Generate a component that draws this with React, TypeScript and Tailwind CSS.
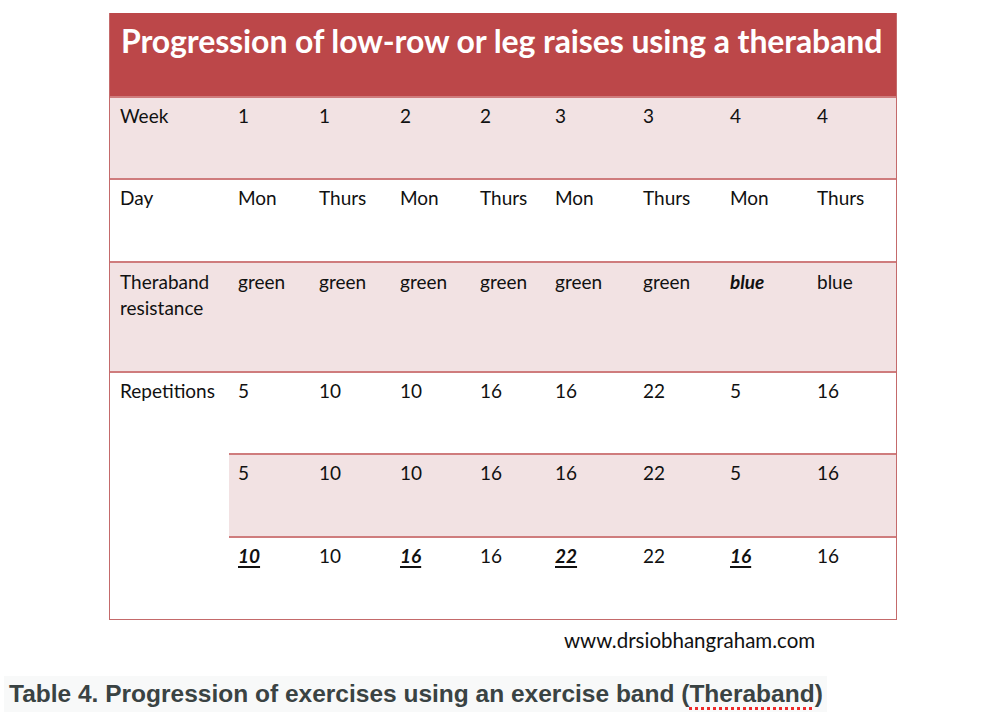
const weeks = ["1", "1", "2", "2", "3", "3", "4", "4"];
const days = ["Mon", "Thurs", "Mon", "Thurs", "Mon", "Thurs", "Mon", "Thurs"];
const bands = ["green", "green", "green", "green", "green", "green", "blue", "blue"];
const reps1 = ["5", "10", "10", "16", "16", "22", "5", "16"];
const reps3 = ["10", "10", "16", "16", "22", "22", "16", "16"];

const cellFont = "[font-family:Lato,'Open_Sans',sans-serif]";

function Cell({
  children,
  bg,
  first,
  className = "",
}: {
  children?: React.ReactNode;
  bg: string;
  first?: boolean;
  className?: string;
}) {
  return (
    <div
      className={`border-t-2 border-[#cf7c7d] pt-[6px] text-[19px] leading-[23px] text-[#111] ${
        first ? "pl-[10px]" : "pl-[9px]"
      } ${bg} ${className}`}
    >
      {children}
    </div>
  );
}

export default function App() {
  return (
    <div className="w-[1000px] h-[718px] bg-white overflow-hidden">
      <div className="pt-[13px] pl-[109px]">
        <div
          className={`w-fit border-x border-b border-[#c46a6b] grid grid-cols-[119px_81px_81px_80px_75px_88px_87px_87px_88px] grid-rows-[83px_82px_83px_110px_82px_83px_83px] ${cellFont}`}
        >
          {/* header */}
          <div className="col-span-9 bg-[#bc4749] pl-[11px] pt-[8px] text-white font-bold text-[32px] leading-[40px] tracking-[-0.1px]">
            Progression of low-row or leg raises using a theraband
          </div>

          {/* week */}
          <Cell bg="bg-[#f2e2e3]" first>
            Week
          </Cell>
          {weeks.map((w, i) => (
            <Cell key={"w" + i} bg="bg-[#f2e2e3]">
              {w}
            </Cell>
          ))}

          {/* day */}
          <Cell bg="bg-white" first>
            Day
          </Cell>
          {days.map((d, i) => (
            <Cell key={"d" + i} bg="bg-white">
              {d}
            </Cell>
          ))}

          {/* theraband resistance */}
          <Cell bg="bg-[#f2e2e3]" first className="leading-[26px] pt-[4px]">
            Theraband resistance
          </Cell>
          {bands.map((b, i) => (
            <Cell
              key={"b" + i}
              bg="bg-[#f2e2e3]"
              className={i === 6 ? "font-bold italic leading-[26px] pt-[4px]" : "leading-[26px] pt-[4px]"}
            >
              {b}
            </Cell>
          ))}

          {/* repetitions */}
          <Cell bg="bg-white" first className="row-span-3">
            Repetitions
          </Cell>
          {reps1.map((r, i) => (
            <Cell key={"r1" + i} bg="bg-white">
              {r}
            </Cell>
          ))}
          {reps1.map((r, i) => (
            <Cell key={"r2" + i} bg="bg-[#f2e2e3]">
              {r}
            </Cell>
          ))}
          {reps3.map((r, i) => (
            <Cell key={"r3" + i} bg="bg-white">
              {i % 2 === 0 ? (
                <span className="font-bold italic underline underline-offset-[3px] decoration-[1.5px]">
                  {r}
                </span>
              ) : (
                r
              )}
            </Cell>
          ))}
        </div>
      </div>

      <div className={`mt-[8px] pl-[564px] text-[20.5px] leading-[25px] text-[#111] ${cellFont}`}>
        www.drsiobhangraham.com
      </div>

      <div className="mt-[23px] pl-[4px]">
        <div className="inline-block bg-[#f8f9f9] pl-[5px] pr-[4px] py-[2px] [font-family:'Liberation_Sans',Arial,sans-serif] font-bold text-[24.5px] leading-[32px] text-[#3a4343]">
          Table 4. Progression of exercises using an exercise band (
          <span className="underline decoration-dotted decoration-[#ee2a2a] decoration-[3px] underline-offset-[5px]">
            Theraband
          </span>
          )
        </div>
      </div>
    </div>
  );
}
